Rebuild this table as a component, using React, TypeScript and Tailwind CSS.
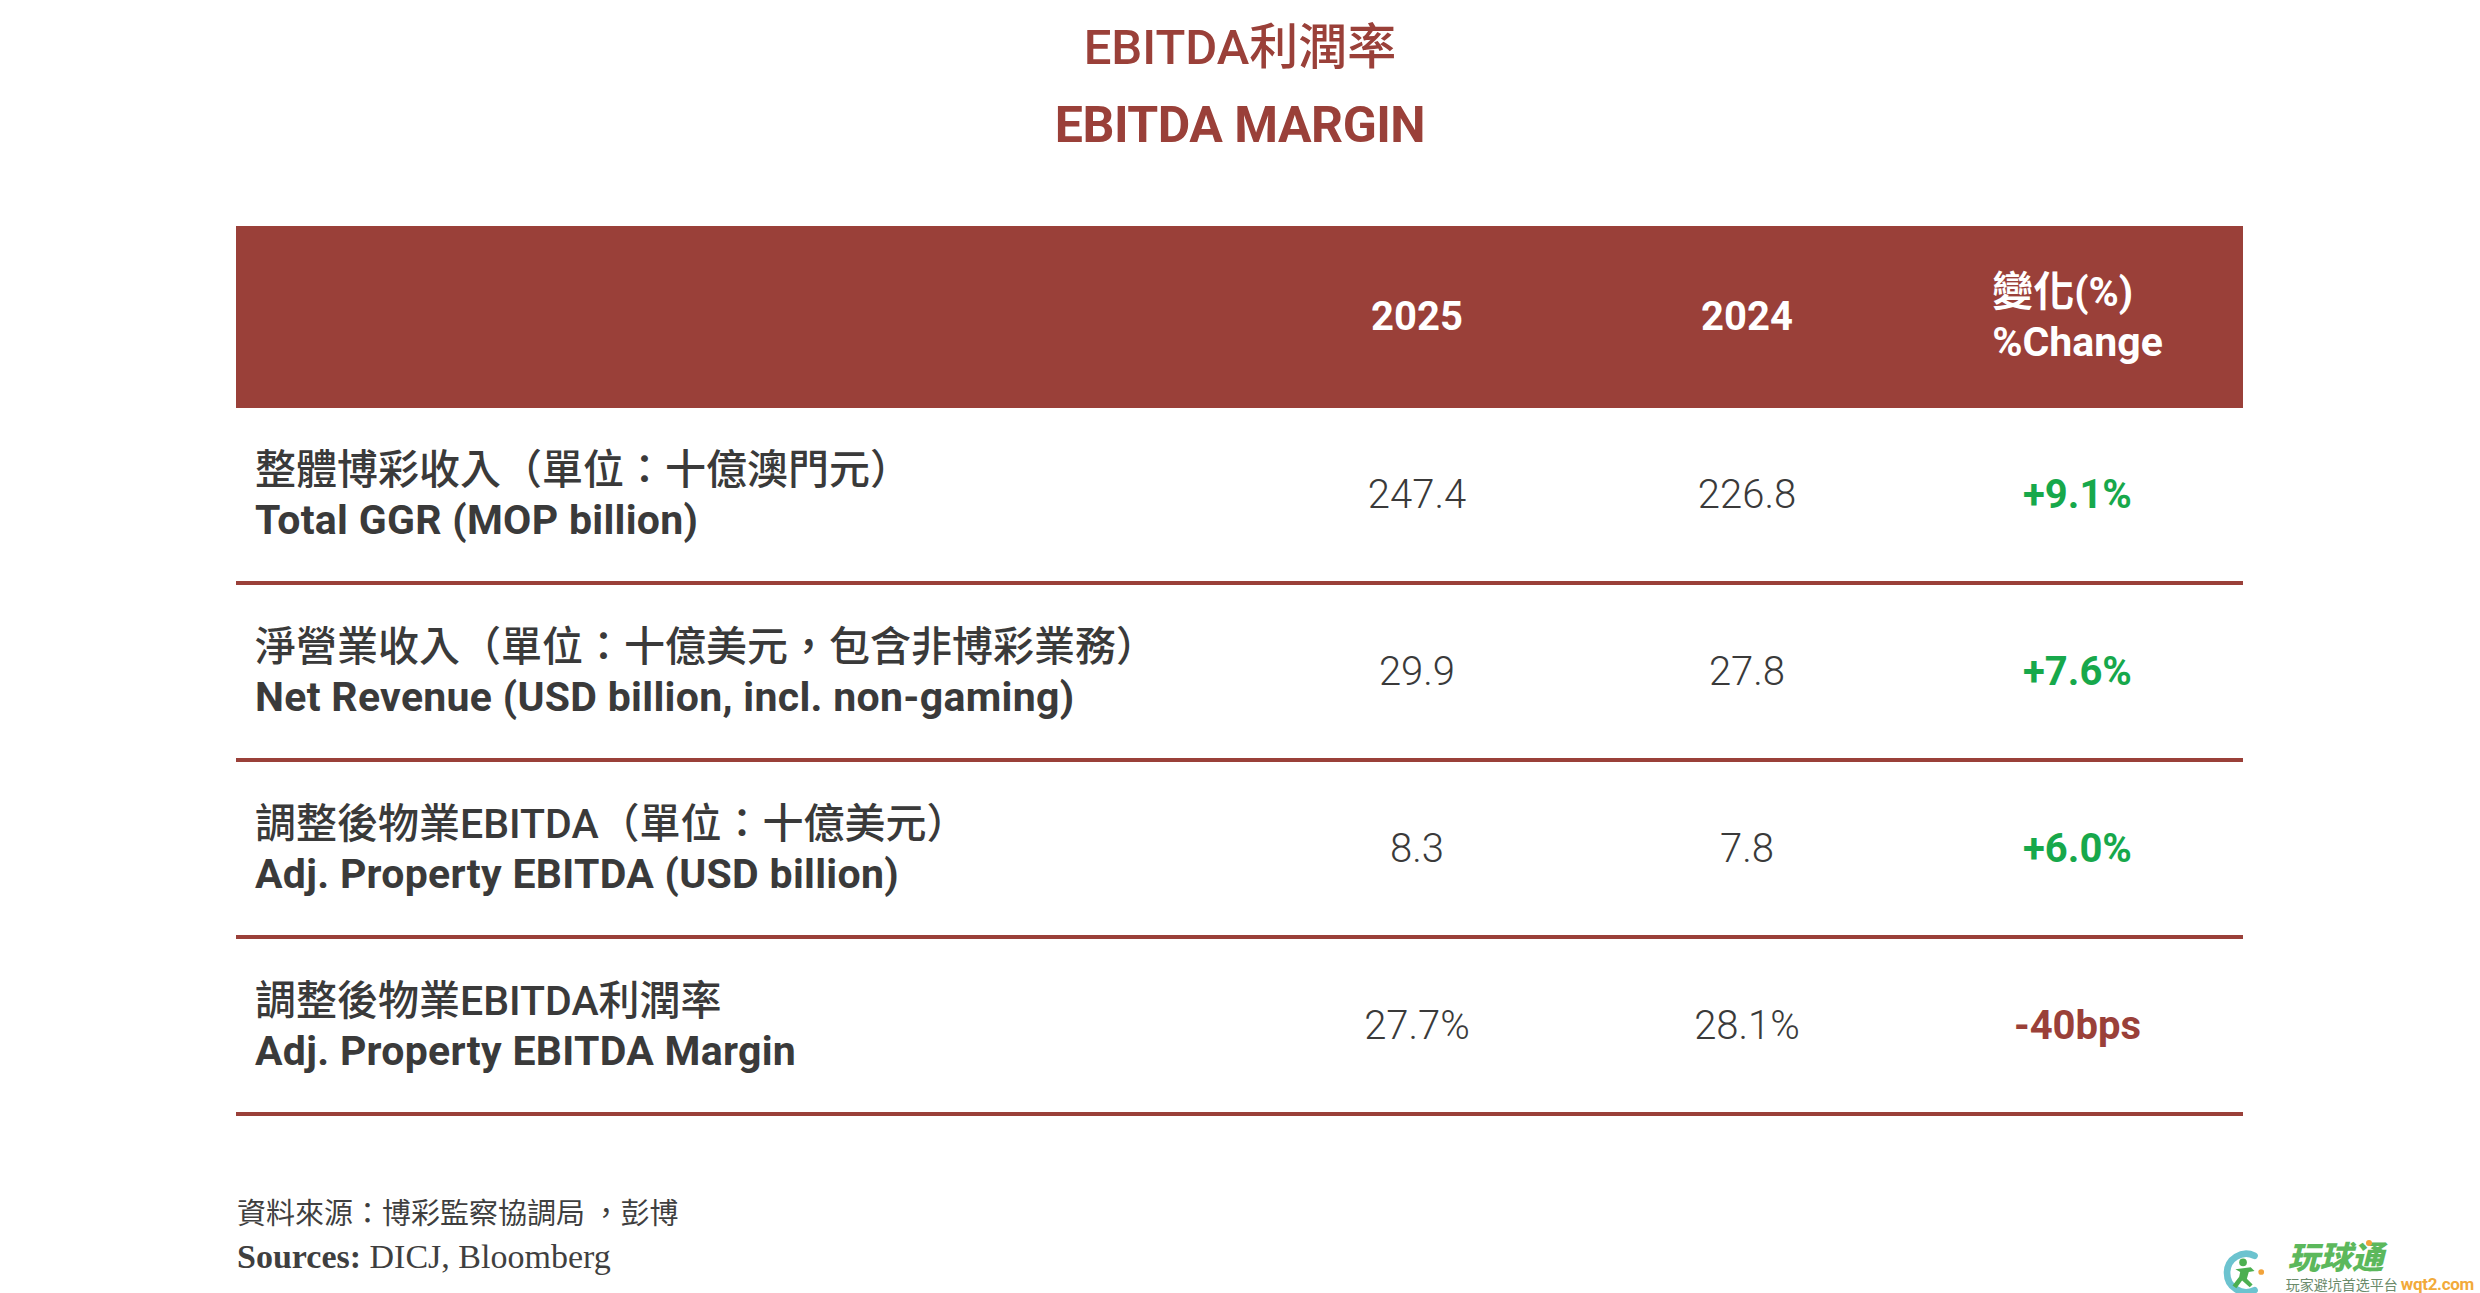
const rows = [
  {
    zh: "整體博彩收入（單位：十億澳門元）",
    en: "Total GGR (MOP billion)",
    y25: "247.4",
    y24: "226.8",
    change: "+9.1%",
    up: true,
  },
  {
    zh: "淨營業收入（單位：十億美元，包含非博彩業務）",
    en: "Net Revenue (USD billion, incl. non-gaming)",
    y25: "29.9",
    y24: "27.8",
    change: "+7.6%",
    up: true,
  },
  {
    zh: "調整後物業EBITDA（單位：十億美元）",
    en: "Adj. Property EBITDA (USD billion)",
    y25: "8.3",
    y24: "7.8",
    change: "+6.0%",
    up: true,
  },
  {
    zh: "調整後物業EBITDA利潤率",
    en: "Adj. Property EBITDA Margin",
    y25: "27.7%",
    y24: "28.1%",
    change: "-40bps",
    up: false,
  },
];

function Logo() {
  return (
    <div className="absolute bottom-0 right-[6px] flex items-end gap-[20px]">
      <svg width="44" height="46" viewBox="0 0 46 46" className="mb-[-2px]">
        <path
          d="M34 6 A20 20 0 1 0 34 42"
          fill="none"
          stroke="#6cc3cf"
          strokeWidth="7"
          strokeLinecap="round"
        />
        <circle cx="22" cy="13" r="4" fill="#4caf50" />
        <path
          d="M14 20 L30 18 L34 22 L28 23 L26 30 L32 36 L29 39 L21 32 L15 40 L11 37 L18 28 L19 23 Z"
          fill="#4caf50"
        />
        <circle cx="41" cy="23" r="3" fill="#f2a33a" />
      </svg>
      <div className="flex flex-col gap-[8px]">
        <div className="relative pl-[2px] text-[32px] font-black italic leading-[26px] text-[#5cb85c] font-['Noto_Sans_CJK_SC',sans-serif]">
          玩球通
          <span className="absolute left-[80px] top-[-2px] h-[6px] w-[6px] rounded-full bg-[#f2a33a]" />
        </div>
        <div className="flex items-end gap-[3px] pb-[1px] leading-[16px]">
          <span className="text-[14px] text-[#6a8a6a] font-['Noto_Sans_CJK_SC',sans-serif]">
            玩家避坑首选平台
          </span>
          <span className="text-[17px] font-bold tracking-[-0.3px] text-[#f2aa3a] font-['Roboto',sans-serif]">
            wqt2.com
          </span>
        </div>
      </div>
    </div>
  );
}

export default function App() {
  return (
    <div className="relative h-[1293px] w-[2480px] overflow-hidden bg-white font-['Roboto','Noto_Sans_CJK_TC',sans-serif]">
      <div className="flex flex-col items-center pt-[18px] text-[#9a4039]">
        <h2 className="h-[60px] text-[49px] font-medium leading-[60px]">EBITDA利潤率</h2>
        <h1 className="mt-[17px] h-[60px] text-[50px] font-bold leading-[60px] tracking-[-0.5px]">
          EBITDA MARGIN
        </h1>
      </div>

      <div className="ml-[236px] mt-[71px] w-[2007px]">
        <div className="grid h-[182px] grid-cols-[1016px_330px_330px_331px] items-center bg-[#9a4039] text-[40px] font-bold text-white">
          <div />
          <div className="text-center">2025</div>
          <div className="text-center">2024</div>
          <div className="flex justify-center">
            <div className="text-[41px] leading-[50px]">
              <div>變化(%)</div>
              <div>%Change</div>
            </div>
          </div>
        </div>

        {rows.map((r) => (
          <div
            key={r.en}
            className="grid h-[177px] grid-cols-[1016px_330px_330px_331px] items-center border-b-4 border-[#9a4039] text-[#3a3a3a]"
          >
            <div className="pl-[19px] leading-[50px]">
              <div className="text-[41px] font-medium">{r.zh}</div>
              <div className="text-[41px] font-bold tracking-[0.3px]">{r.en}</div>
            </div>
            <div className="text-center text-[40px] font-light">{r.y25}</div>
            <div className="text-center text-[40px] font-light">{r.y24}</div>
            <div
              className={
                r.up
                  ? "text-center text-[40px] font-bold text-[#17a84b]"
                  : "text-center text-[40px] font-bold text-[#9a4039]"
              }
            >
              {r.change}
            </div>
          </div>
        ))}
      </div>

      <div className="ml-[237px] mt-[73px] text-[#3f3f3f]">
        <div className="text-[29px] leading-[44px] font-['Noto_Sans_CJK_TC',sans-serif]">
          資料來源：博彩監察協調局 ，彭博
        </div>
        <div className="mt-[1px] text-[34px] leading-[46px] font-['Liberation_Serif',serif]">
          <span className="font-bold">Sources:</span> DICJ, Bloomberg
        </div>
      </div>

      <Logo />
    </div>
  );
}
